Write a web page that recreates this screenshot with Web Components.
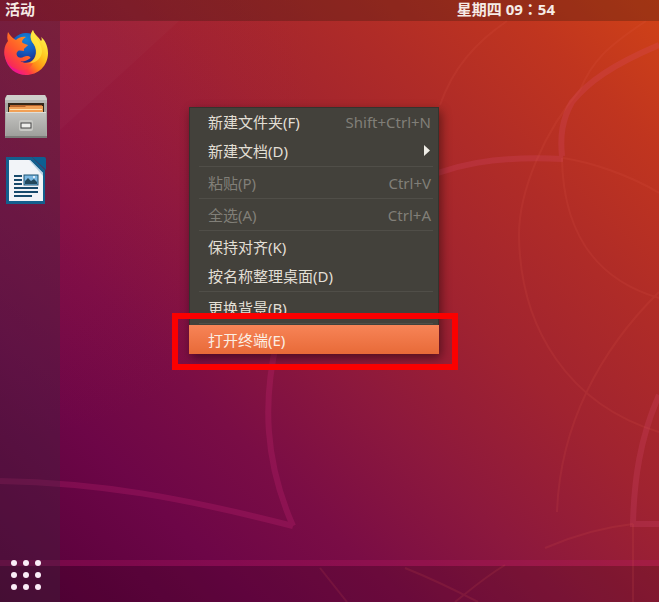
<!DOCTYPE html>
<html lang="zh-CN">
<head>
<meta charset="utf-8">
<title>桌面</title>
<style>
  html, body {
    height: 100%;
    margin: 0;
    background: #fff;
  }
  body {
    box-sizing: border-box;
    padding-right: 8px;
    font-family: "Noto Sans", "Noto Sans CJK SC", sans-serif;
    font-size: 15px;
  }
</style>
</head>
<body>
<desktop-shell>
  <top-bar slot="bar" activities="活动" day="星期四" hour="09" minute="54"></top-bar>
  <app-dock slot="dock"></app-dock>
  <context-menu>
    <menu-entry label="新建文件夹(F)" shortcut="Shift+Ctrl+N"></menu-entry>
    <menu-entry label="新建文档(D)" submenu></menu-entry>
    <menu-line></menu-line>
    <menu-entry label="粘贴(P)" shortcut="Ctrl+V" disabled></menu-entry>
    <menu-line></menu-line>
    <menu-entry label="全选(A)" shortcut="Ctrl+A" disabled></menu-entry>
    <menu-line></menu-line>
    <menu-entry label="保持对齐(K)"></menu-entry>
    <menu-entry label="按名称整理桌面(D)"></menu-entry>
    <menu-line></menu-line>
    <menu-entry label="更换背景(B)"></menu-entry>
    <menu-line></menu-line>
    <menu-entry label="打开终端(E)" active></menu-entry>
  </context-menu>
</desktop-shell>

<script>
function makeTemplate(html) {
  const template = document.createElement('template');
  template.innerHTML = html;
  return template;
}

const wallpaperTemplate = makeTemplate(`
  <style>
  :host {
    display: block;
  }
  svg {
    display: block;
    width: 100%;
    height: 100%;
  }
  </style>
  <svg viewBox="0 0 659 602" preserveAspectRatio="none" aria-hidden="true">
    <defs>
      <linearGradient id="sky" gradientUnits="userSpaceOnUse" x1="15" y1="615" x2="644" y2="-13">
        <stop offset="0" stop-color="#540038"/>
        <stop offset=".2" stop-color="#6d0647"/>
        <stop offset=".32" stop-color="#7a0d45"/>
        <stop offset=".45" stop-color="#8c183d"/>
        <stop offset=".6" stop-color="#a02330"/>
        <stop offset=".75" stop-color="#b02c27"/>
        <stop offset=".88" stop-color="#c0351f"/>
        <stop offset="1" stop-color="#d04217"/>
      </linearGradient>
      <radialGradient id="glow" gradientUnits="userSpaceOnUse" cx="0" cy="120" r="320">
        <stop offset="0" stop-color="#b01850" stop-opacity=".22"/>
        <stop offset="1" stop-color="#b01850" stop-opacity="0"/>
      </radialGradient>
    </defs>
    <rect width="659" height="602" fill="url(#sky)"/>
    <rect width="659" height="602" fill="url(#glow)"/>
    <path d="M60 130 180 20H60z" fill="#fff" opacity=".02"/>
    <path d="M0 566H659V602H0z" fill="#200010" opacity=".18"/>
    <g fill="none" stroke="#e0507c" stroke-width="6" opacity=".2">
      <path d="M400 190C450 162 500 156 563 159"/>
      <path d="M659 45C612 65 588 82 572 102C562 120 560 136 562 156"/>
      <path d="M659 395C640 438 634 480 633 524H659"/>
    </g>
    <g fill="none" stroke="#d02878" stroke-width="6" opacity=".24">
      <path d="M277 340C263 400 264 460 293 526"/>
      <path d="M0 481C100 483 180 497 293 526"/>
    </g>
    <path d="M0 563H659" stroke="#c01868" stroke-width="6" opacity=".28"/>
    <g fill="none" stroke="#e86050" stroke-width="2" opacity=".12">
      <path d="M440 105C453 68 475 43 507 21"/>
      <path d="M646 21C605 48 592 62 580 90C545 130 519 190 519 235C520 330 570 405 659 432"/>
      <path d="M563 158C590 162 630 175 659 193"/>
      <path d="M562 158C563 225 590 278 659 298"/>
      <path d="M659 292C600 350 560 425 557 512"/>
      <path d="M545 548C575 535 605 527 633 524"/>
      <path d="M633 524V602"/>
      <path d="M320 568 347 602"/>
      <path d="M405 568C430 578 455 590 478 602"/>
      <path d="M505 565C485 577 470 590 455 602"/>
    </g>
  </svg>
`);

class DesktopWallpaper extends HTMLElement {
  constructor() {
    super()
    this.attachShadow({ mode: 'open' }).appendChild(wallpaperTemplate.content.cloneNode(true));
  }
}

const shellTemplate = makeTemplate(`
  <style>
  :host {
    display: grid;
    grid-template: auto 1fr / auto 1fr;
    position: relative;
    height: 100%;
    overflow: hidden;
  }
  desktop-wallpaper {
    position: absolute;
    inset: 0;
  }
  .bar {
    grid-column: 1 / -1;
    position: relative;
  }
  .dock, main {
    position: relative;
  }
  </style>
  <desktop-wallpaper></desktop-wallpaper>
  <header class="bar"><slot name="bar"></slot></header>
  <nav class="dock"><slot name="dock"></slot></nav>
  <main><slot></slot></main>
`);

class DesktopShell extends HTMLElement {
  constructor() {
    super()
    this.attachShadow({ mode: 'open' }).appendChild(shellTemplate.content.cloneNode(true));
  }
}

const barTemplate = makeTemplate(`
  <style>
  :host {
    display: flex;
    justify-content: space-between;
    align-items: flex-start;
    height: 21px;
    padding: 0 104px 0 5px;
    background: rgba(40, 20, 10, 0.28);
  }
  button {
    border: none;
    padding: 0;
    background: none;
    color: #f6ebe6;
    font: inherit;
    font-weight: bold;
    line-height: 18px;
    white-space: nowrap;
  }
  .colon {
    font-family: "Noto Sans CJK TC", sans-serif;
  }
  </style>
  <button class="activities"></button>
  <button class="clock"><span class="day"></span> <span class="hour"></span><span class="colon" lang="zh-TW">：</span><span class="minute"></span></button>
`);

class TopBar extends HTMLElement {
  constructor() {
    super()
    this.shadow = this.attachShadow({ mode: 'open' });
    this.shadow.appendChild(barTemplate.content.cloneNode(true));
  }

  connectedCallback() {
    ['activities', 'day', 'hour', 'minute'].forEach(name => {
      this.shadow.querySelector(`.${name}`).textContent = this.getAttribute(name);
    });
  }
}

const dockTemplate = makeTemplate(`
  <style>
  :host {
    display: flex;
    flex-direction: column;
    box-sizing: border-box;
    width: 60px;
    height: 100%;
    padding: 8px 2px 11px;
    background: rgba(62, 42, 62, 0.34);
  }
  button {
    display: block;
    width: 48px;
    height: 48px;
    margin: 0 0 16px;
    border: none;
    padding: 0;
    background: none;
    cursor: pointer;
  }
  .apps {
    width: 48px;
    height: 32px;
    margin: auto 0 0;
  }
  svg {
    display: block;
    width: 100%;
    height: 100%;
  }
  </style>
  <button aria-label="Firefox">
    <svg viewBox="0 0 48 48">
      <defs>
        <linearGradient id="tail" x1=".9" y1=".1" x2=".15" y2=".8">
          <stop offset="0" stop-color="#fff44f"/>
          <stop offset=".35" stop-color="#ffc21d"/>
          <stop offset=".6" stop-color="#ff8a16"/>
          <stop offset=".8" stop-color="#ff3647"/>
          <stop offset="1" stop-color="#f0168c"/>
        </linearGradient>
        <linearGradient id="head" x1=".8" y1="0" x2=".1" y2="1">
          <stop offset="0" stop-color="#ff9a1f"/>
          <stop offset=".5" stop-color="#ff5a2a"/>
          <stop offset="1" stop-color="#f5156c"/>
        </linearGradient>
        <radialGradient id="globe" cx=".5" cy=".2" r=".7">
          <stop offset="0" stop-color="#1583d8"/>
          <stop offset=".5" stop-color="#1260c4"/>
          <stop offset="1" stop-color="#1d2f8c"/>
        </radialGradient>
      </defs>
      <circle cx="24" cy="20" r="16" fill="url(#globe)"/>
      <path d="M31 1C28 5 28 9 30 13C36 19 35 30 28 33C23 35 16 33 15 27C12 23 10 18 7 13C4 17 2 22 3 28C5 39 14 46 24 46C36 46 46 37 46 24C46 16 42 10 39 8C40 10 40 11 39 12C36 7 32 5 31 1Z" fill="url(#tail)"/>
      <path d="M6 3C5 7 5 10 6 12C2 17 1 24 4 31C7 37 12 40 17 41C24 42 29 39 31 34C26 36 21 35 18 32C21 33 24 32 27 30C30 29 28 27 25 27C22 27 20 30 16 28C14 26 14 24 16 22C18 21 20 22 22 22C21 19 25 18 26 16C23 15 20 14 20 13C20 11 22 9 24 8C20 7 16 9 14 11C12 10 8 7 6 3Z" fill="url(#head)"/>
      <path d="M31 1C28 6 28 9 31 14C37 22 34 30 28 34C35 34 40 28 40 22C40 15 33 8 31 1Z" fill="#fff04a" opacity=".6"/>
    </svg>
  </button>
  <button aria-label="文件">
    <svg viewBox="0 0 48 48">
      <defs>
        <linearGradient id="steel" x1="0" y1="0" x2="0" y2="1">
          <stop offset="0" stop-color="#c4c4c1"/>
          <stop offset="1" stop-color="#9d9d9a"/>
        </linearGradient>
      </defs>
      <path d="M5 2H43L45 5V43Q45 45 43 45H5Q3 45 3 43V5Z" fill="#a8a8a4"/>
      <path d="M5 2H43L45 7H3Z" fill="#cfcfcb"/>
      <path d="M3 7H45V10H3Z" fill="#b8b8b4"/>
      <path d="M6 10H42V20H6Z" fill="#352719"/>
      <path d="M8 12H40V20H8Z" fill="#b8642c"/>
      <path d="M7 14H23L24 13H41V20H7Z" fill="#f1a056"/>
      <path d="M8 16H40V17H8Z" fill="#ffe1b0"/>
      <path d="M4 19H44V44H4Z" fill="url(#steel)"/>
      <path d="M4 19H44V20H4Z" fill="#deded9"/>
      <path d="M3 43H45V45H3Z" fill="#7c7c79"/>
      <rect x="17" y="27" width="14" height="11" rx="2" fill="#c8c8c4"/>
      <rect x="19" y="30" width="10" height="5" fill="#efefec" stroke="#444" stroke-width="1"/>
    </svg>
  </button>
  <button aria-label="LibreOffice Writer">
    <svg viewBox="0 0 48 48">
      <path d="M4 0H30L43 13V47H4Z" fill="#145f8d"/>
      <path d="M30 0H42Q44 0 44 2V13Z" fill="#0d5f92"/>
      <path d="M7 3H28L41 16V44H7Z" fill="#f2f4f8"/>
      <path d="M28 3 41 16V19L27 3Z" fill="#b9d2e4"/>
      <path d="M12 18H20V20H12ZM12 22H20V24H12ZM12 26H20V28H12ZM12 30H36V32H12ZM12 34H36V36H12ZM12 38H30V40H12Z" fill="#174a6c"/>
      <rect x="22" y="18" width="14" height="10" fill="#7cb8e2" stroke="#1c5474" stroke-width="1"/>
      <path d="M23 27V24L26 21L29 24L32 22L35 25V27Z" fill="#22485c"/>
      <circle cx="32" cy="20" r="1" fill="#fff"/>
    </svg>
  </button>
  <button class="apps" aria-label="显示应用程序">
    <svg viewBox="0 0 48 32" fill="#fbeef8">
      <circle cx="12" cy="4" r="3"/><circle cx="24" cy="4" r="3"/><circle cx="36" cy="4" r="3"/>
      <circle cx="12" cy="16" r="3"/><circle cx="24" cy="16" r="3"/><circle cx="36" cy="16" r="3"/>
      <circle cx="12" cy="28" r="3"/><circle cx="24" cy="28" r="3"/><circle cx="36" cy="28" r="3"/>
    </svg>
  </button>
`);

class AppDock extends HTMLElement {
  constructor() {
    super()
    this.attachShadow({ mode: 'open' }).appendChild(dockTemplate.content.cloneNode(true));
  }
}

const menuTemplate = makeTemplate(`
  <style>
  :host {
    display: block;
    position: absolute;
    left: 129px;
    top: 86px;
    width: 250px;
    background: #43413b;
    box-shadow: inset 0 0 0 1px #35332e, 2px 4px 10px rgba(0, 0, 0, 0.45);
  }
  /* marks the last entry */
  .frame {
    position: absolute;
    left: -17px;
    right: -19px;
    bottom: -16px;
    height: 45px;
    border: 6px solid #fb0000;
    pointer-events: none;
  }
  </style>
  <div role="menu"><slot></slot></div>
  <div class="frame"></div>
`);

class ContextMenu extends HTMLElement {
  constructor() {
    super()
    this.attachShadow({ mode: 'open' }).appendChild(menuTemplate.content.cloneNode(true));
  }
}

const entryTemplate = makeTemplate(`
  <style>
  :host {
    display: block;
  }
  button {
    display: flex;
    justify-content: space-between;
    align-items: center;
    width: 100%;
    height: 29px;
    border: none;
    padding: 0 8px 0 19px;
    background: none;
    color: #e2dfd5;
    font: inherit;
    line-height: 20px;
    white-space: nowrap;
    text-align: left;
  }
  button:disabled {
    color: #817f78;
  }
  .shortcut {
    color: #817f78;
  }
  .arrow {
    display: none;
    width: 6px;
    height: 11px;
    margin-right: 1px;
    background: #efede6;
    clip-path: polygon(0 0, 100% 50%, 0 100%);
  }
  :host([submenu]) .arrow {
    display: block;
  }
  :host([submenu]) .shortcut {
    display: none;
  }
  button:not(:disabled):hover,
  :host([active]) button {
    background: linear-gradient(#f78457, #e86a38);
    color: #fbeee3;
  }
  </style>
  <button role="menuitem"><span class="label"></span><span class="shortcut"></span><span class="arrow"></span></button>
`);

class MenuEntry extends HTMLElement {
  constructor() {
    super()
    this.shadow = this.attachShadow({ mode: 'open' });
    this.shadow.appendChild(entryTemplate.content.cloneNode(true));
  }

  connectedCallback() {
    this.shadow.querySelector('.label').textContent = this.getAttribute('label');
    this.shadow.querySelector('.shortcut').textContent = this.getAttribute('shortcut') || '';
    this.shadow.querySelector('button').disabled = this.hasAttribute('disabled');
  }
}

class MenuLine extends HTMLElement {
  constructor() {
    super()
    this.attachShadow({ mode: 'open' }).innerHTML = `
      <style>
      :host {
        display: block;
        padding: 1px 6px 1px 10px;
      }
      hr {
        height: 1px;
        margin: 0;
        border: none;
        background: #504e48;
      }
      </style>
      <hr>
    `;
  }
}

window.customElements.define('desktop-wallpaper', DesktopWallpaper);
window.customElements.define('desktop-shell', DesktopShell);
window.customElements.define('top-bar', TopBar);
window.customElements.define('app-dock', AppDock);
window.customElements.define('context-menu', ContextMenu);
window.customElements.define('menu-entry', MenuEntry);
window.customElements.define('menu-line', MenuLine);
</script>
</body>
</html>
